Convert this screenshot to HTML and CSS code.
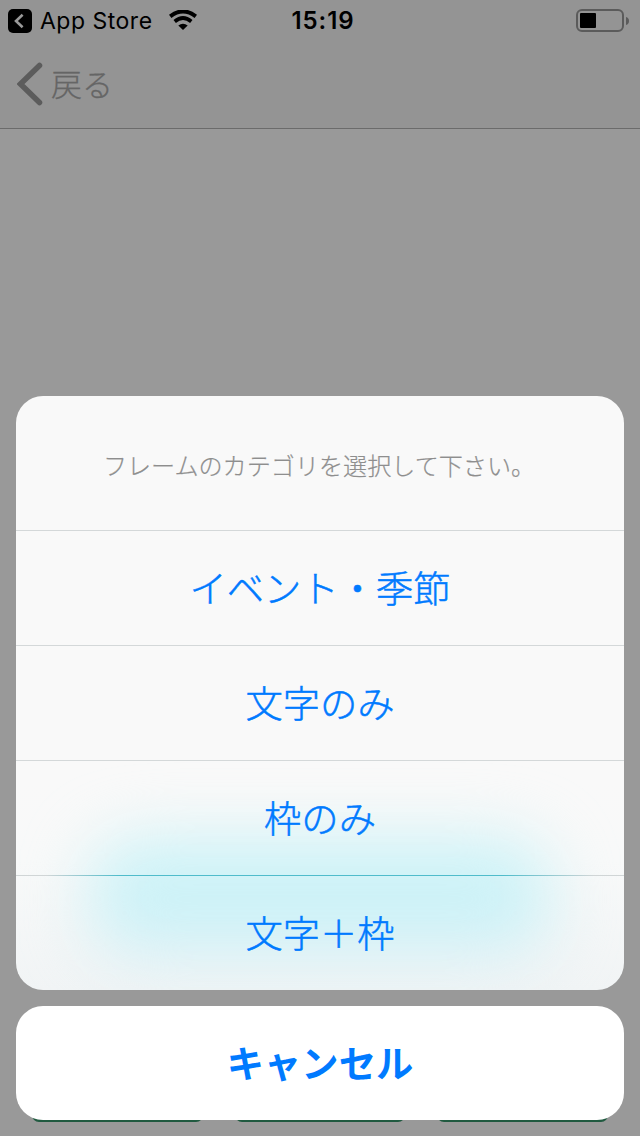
FILE: index.html
```html
<!DOCTYPE html>
<html lang="ja">
<head>
<meta charset="utf-8">
<title>フレーム</title>
<link rel="stylesheet" href="styles.css">
</head>
<body>
<div class="screen">
  <header class="top">
    <div class="status">
      <div class="status-left">
        <svg class="return-icon" viewBox="0 0 24 24"><rect width="24" height="24" rx="5"/><path d="M14.6 5.800 8 12l6.600 6.200" fill="none" stroke="#999" stroke-width="2.600"/></svg>
        <span class="app-name">App Store</span>
        <svg class="wifi" viewBox="0 0 28 20"><path d="M1.200 6.300Q14-3.500 26.800 6.300" fill="none" stroke="#000" stroke-width="4"/><path d="M5.700 11.500Q14 4.500 22.300 11.500" fill="none" stroke="#000" stroke-width="3.700"/><path d="M9.300 15.600Q14 12 18.700 15.600L14 20Z"/></svg>
      </div>
      <span class="time">15:19</span>
      <svg class="battery" viewBox="0 0 54 24"><rect x="1" y="1" width="46" height="21" rx="5" fill="none" stroke="#5b5b5b" stroke-width="2"/><rect x="4" y="4" width="16" height="15" rx="1"/><path d="M50 8Q53 8.800 53 12T50 16Z" fill="#5b5b5b"/></svg>
    </div>
    <nav class="nav">
      <svg class="chevron" viewBox="0 0 26 44"><path d="M22.500 3.500 3.500 22 22.500 40.500" fill="none" stroke="#5c5c5c" stroke-width="5.500" stroke-linecap="round"/></svg>
      <span class="back">戻る</span>
    </nav>
  </header>
  <div class="toolbar">
    <div class="tool"></div><div class="tool"></div><div class="tool"></div>
  </div>
  <div class="overlay">
    <div class="sheet">
      <div class="glow"></div>
      <div class="sheet-title">フレームのカテゴリを選択して下さい。</div>
      <div class="option">イベント・季節</div>
      <div class="option">文字のみ</div>
      <div class="option">枠のみ</div>
      <div class="option tinted">文字＋枠</div>
    </div>
    <div class="cancel">キャンセル</div>
  </div>
</div>
</body>
</html>
```

FILE: styles.css
```css
* { box-sizing: border-box; }
body { margin: 0; }
svg { display: block; flex: none; }
.screen {
  position: relative;
  display: flex;
  flex-direction: column;
  justify-content: space-between;
  width: 640px;
  height: 1136px;
  overflow: hidden;
  background: #999;
  font-family: "Inter", "Noto Sans CJK JP", sans-serif;
}
.top {
  height: 129px;
  background: #949494;
  border-bottom: 1px solid #6b6b6b;
}
.status {
  display: grid;
  grid-template-columns: 1fr auto 1fr;
  align-items: center;
  height: 40px;
  padding: 2px 10px 0 8px;
}
.status-left { display: flex; align-items: center; }
.return-icon { width: 24px; height: 24px; }
.app-name { margin-left: 8px; font-size: 23px; letter-spacing: 0.5px; line-height: 30px; }
.wifi { width: 28px; height: 20px; margin: -2px 0 0 16px; }
.time { font-size: 24px; font-weight: 600; letter-spacing: 0.9px; line-height: 30px; padding-left: 8px; }
.battery { justify-self: end; width: 54px; height: 24px; }
.nav { display: flex; align-items: center; height: 88px; padding-left: 17px; }
.chevron { width: 26px; height: 44px; }
.back {
  margin: -3px 0 0 8px;
  color: #656565;
  font-family: "Noto Sans CJK JP", sans-serif;
  font-size: 31px;
  font-weight: 300;
  line-height: 44px;
  -webkit-text-stroke: 0.3px currentColor;
}
.toolbar { display: flex; gap: 32px; height: 94px; padding: 0 32px 14px; }
.tool { flex: 1; border-radius: 7px; background: #205a40; }
.overlay {
  position: absolute;
  inset: 0;
  display: flex;
  flex-direction: column;
  justify-content: flex-end;
  gap: 16px;
  padding: 0 16px 16px;
  font-family: "Noto Sans CJK JP", sans-serif;
  text-align: center;
}
.sheet {
  position: relative;
  z-index: 0;
  height: 594px;
  overflow: hidden;
  border-radius: 27px;
  background: linear-gradient(#f9f9f9 0 65%, #f8f9f9 78%, #f1f4f5);
}
.glow {
  position: absolute;
  z-index: -1;
  left: 74px;
  top: 443px;
  width: 460px;
  height: 120px;
  border-radius: 50px;
  background: linear-gradient(#cbf2f7 60%, #d8eff6);
  filter: blur(32px);
}
.sheet-title {
  height: 134px;
  padding: 3px 2px 0 0;
  color: #8e8e8e;
  font-size: 24.100px;
  font-weight: 300;
  line-height: 131px;
  -webkit-text-stroke: 0.2px currentColor;
}
.option {
  height: 115px;
  border-top: 1px solid #d4d8d9;
  color: #007aff;
  font-size: 37.300px;
  font-weight: 300;
  line-height: 113px;
  -webkit-text-stroke: 0.5px currentColor;
}
.tinted {
  padding-top: 1px;
  border-top: 0;
  background: linear-gradient(90deg, #d0d5d6 5%, #4fbccb 17%, #4fbccb 80%, #d0d5d6 95%) top / 100% 1px no-repeat;
}
.cancel {
  height: 114px;
  border-radius: 27px;
  background: #fff;
  color: #007aff;
  font-size: 37.300px;
  font-weight: 700;
  line-height: 113px;
}
```
